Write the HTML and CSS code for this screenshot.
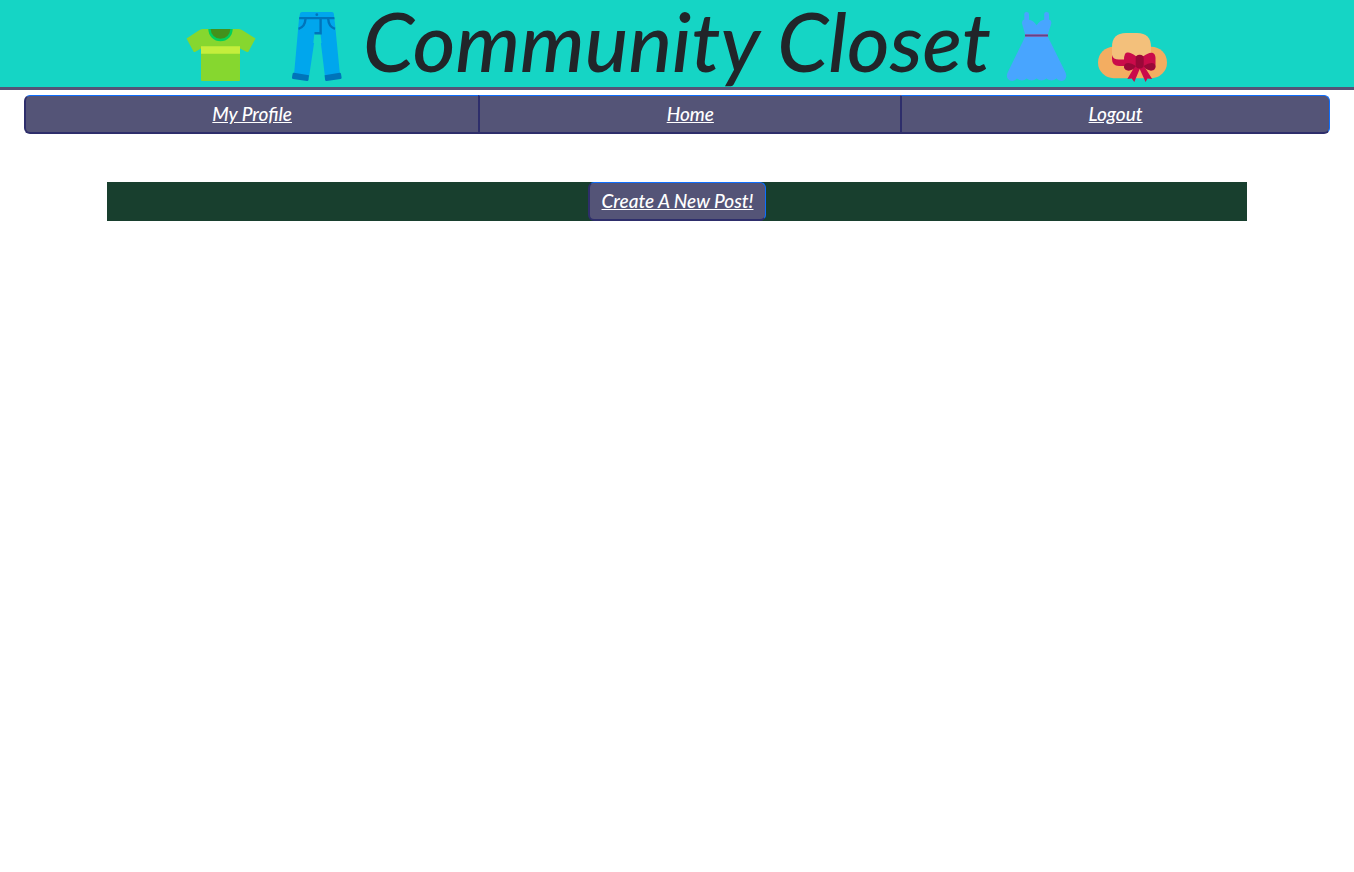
FILE: index.html
```html
<!DOCTYPE html>
<html lang="en">
<head>
<meta charset="utf-8">
<meta name="viewport" content="width=device-width, initial-scale=1">
<title>Community Closet</title>
<link rel="stylesheet" href="styles.css">
</head>
<body>
<header class="site-header">
  <div class="banner">
    <div class="icons">
      <svg class="icon" viewBox="0 0 70 70" aria-hidden="true">
        <path fill="#86d72f" d="M17 17H52.500Q54 17 56 18L69.500 26.500L62.500 39.500Q62 40.300 61 40L54 36.500V68Q54 69 53 69H16Q15 69 15 68V36.500L9 40Q8 40.300 7.500 39.500L.500 26.500L13.500 18Q15.500 17 17 17Z"/>
        <path fill="#c4ee3c" d="M15 34.300H54V41.700H15Z"/>
        <path fill="#00d05c" d="M22.300 17H46.700A12.200 12.200 0 0 1 22.300 17Z"/>
        <path fill="#43911b" d="M24.700 17H44.300A9.800 9.800 0 0 1 24.700 17Z"/>
      </svg>
      <svg class="icon" viewBox="0 0 70 70" aria-hidden="true">
        <path fill="#00a6ed" d="M20 0H50Q51.500 0 51.800 1.500L53 12L58 63L43 65L38.700 29.500H32.300L27 65L12 63L17 7L18 1.500Q18.300 0 20 0Z"/>
        <path fill="#00a6ed" d="M31 20H40V22H31Z"/>
        <path fill="#15d5c5" d="M32.300 22H38.500L39.500 31H31.300Z"/>
        <path fill="#0074ba" d="M17.300 5H52.300L52.600 7.300H17ZM12 60.700L27 63.300L26.500 68Q26.300 69 25 68.900L11 67Q9.800 66.600 10 65.500L10.600 61.700Q10.900 60.500 12 60.700ZM57.600 60.700L42.600 63.300L43.100 68Q43.300 69 44.600 68.900L58.600 67Q59.800 66.600 59.600 65.500L59 61.700Q58.700 60.500 57.600 60.700Z"/>
        <path fill="none" stroke="#0074ba" stroke-width="2.400" d="M38.600 7V21.200H32.500M23.500 7Q23 15 16.500 16.800M46.200 7Q46.700 15 53 16.800"/>
        <circle cx="34.800" cy="2.700" r="1.400" fill="#0074ba"/>
      </svg>
    </div>
    <h1 class="title">Community Closet</h1>
    <div class="icons">
      <svg class="icon" viewBox="0 0 70 70" aria-hidden="true">
        <path fill="#48a5ff" d="M22.300 2Q22.300 0 24.600 0T27 2V7.700Q31 8 34.700 13.300Q38 8 42.200 7.700V2Q42.200 0 44.600 0T47 2V7.500Q49.700 8 49.300 11.500L46 22V25L63.500 60.500Q65.500 65.500 62.500 68Q58 70.500 54.500 66.500Q49.500 70.500 44.500 66.500Q39.500 70.500 34.700 66.500Q29.500 70.500 24.800 66.500Q20 70.500 15 66.500Q11.500 70.500 7 68Q3.500 65.500 5.700 60.500L23 25V22L20 11.500Q19.700 8 22.300 7.500Z"/>
        <path fill="#7a62af" d="M23 22H46V25H23Z"/>
        <path fill="#654382" d="M23 23H46V24H23Z"/>
      </svg>
      <svg class="icon" viewBox="0 0 70 70" aria-hidden="true">
        <rect x="0" y="34.700" width="69" height="31.500" rx="15.700" fill="#f3ad61"/>
        <path fill="#f3c07b" d="M14 47V35Q14 21 28 21H39Q53 21 53 35V47L34 51H24Z"/>
        <path fill="#ca0b4a" d="M14 43Q15 47.500 21 47.500H28V54H21Q14 54 14 47Z"/>
        <path fill="#ca0b4a" d="M37 54L29.300 67L33.700 66.500L36.300 70L41.700 57L47.600 70L49.500 66.500L54.200 67L46 54Z"/>
        <path fill="#ca0b4a" d="M37.700 44C33 40.500 29 39.500 27 42Q26 44 26 48V54.500Q26.500 59 31 58.500Q36 57.500 38 54.500H45Q48 57.500 53 58.500Q57.300 59 57.500 54.500V46C57.300 39 51.500 39.500 45.700 44Z"/>
        <path fill="#990838" d="M38 54Q31 49.500 27 52Q25.500 54 26.200 56Q28 59 32 58.300Q36 57.300 38 54ZM45.500 54Q53 49.500 56.500 52Q58 54 57.200 56Q55.500 59 51.500 58.300Q47.500 57.300 45.500 54Z"/>
        <rect x="37.700" y="42.700" width="8" height="13.800" rx="3.800" fill="#990838"/>
      </svg>
    </div>
  </div>
</header>
<nav class="button-group" aria-label="Main">
  <a class="button" href="#profile">My Profile</a>
  <a class="button" href="#home">Home</a>
  <a class="button" href="#logout">Logout</a>
</nav>
<main class="post-bar">
  <a class="button" href="#new-post">Create A New Post!</a>
</main>
</body>
</html>
```
FILE: styles.css
```css
* {
  box-sizing: border-box;
}

body {
  margin: 0;
  background: #fff;
  color: #212529;
  font-family: Lato, "Open Sans", sans-serif;
  font-size: 19px;
  font-style: italic;
  font-weight: 500;
  line-height: 24px;
}

.site-header {
  background: #15d5c5;
  border-bottom: 3px solid #545477;
}

.banner {
  display: flex;
  justify-content: space-between;
  align-items: flex-start;
  max-width: 982px;
  margin: 0 auto;
}

.icons {
  display: flex;
  gap: 26px;
  padding: 12px 0 5px;
}

.icon {
  display: block;
  width: 70px;
  height: 70px;
}

.title {
  margin: 0;
  font-size: 82px;
  font-weight: 500;
  line-height: 80px;
  white-space: nowrap;
}

.button-group {
  display: flex;
  margin: 5px 24px 0;
}

.button {
  padding: 6px 12px;
  background: #545477;
  border: solid #2e2e6b;
  border-width: 1px 0 2px 2px;
  border-top-color: #0d6efd;
  color: #fff;
  text-align: center;
  text-decoration: underline;
}

.button:last-child {
  border-right: 1px solid #0d6efd;
  border-top-right-radius: 6px;
  border-bottom-right-radius: 6px;
}

.button:first-child {
  border-top-left-radius: 6px;
  border-bottom-left-radius: 6px;
}

.button-group .button {
  flex: 1 1 auto;
}

.post-bar {
  display: flex;
  justify-content: center;
  max-width: 1140px;
  margin: 48px auto 0;
  background: #183f2e;
}
```
